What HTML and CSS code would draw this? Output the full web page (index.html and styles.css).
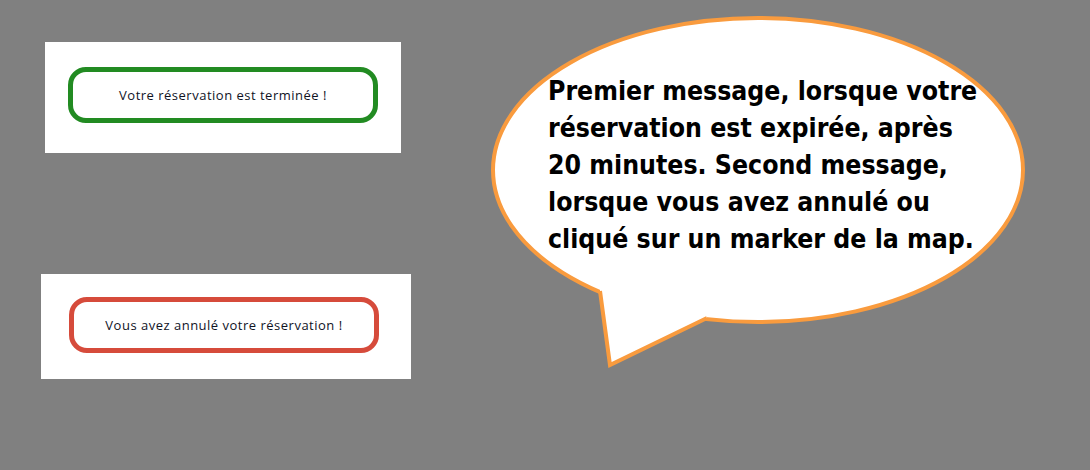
FILE: index.html
```html
<!DOCTYPE html>
<html lang="fr">
<head>
<meta charset="utf-8">
<title>Messages de réservation</title>
<link rel="stylesheet" href="styles.css">
</head>
<body>
<div class="page">
  <div class="cards">
    <div class="card card-done">
      <div class="pill pill-green">Votre réservation est terminée !</div>
    </div>
    <div class="card card-cancel">
      <div class="pill pill-red">Vous avez annulé votre réservation !</div>
    </div>
  </div>
  <div class="bubble">
    <svg class="bubble-shape" width="540" height="360" viewBox="0 0 540 360">
      <ellipse cx="268" cy="155" rx="265" ry="152" fill="#fff" stroke="#f99b3e" stroke-width="4"/>
      <polygon points="110,276 120,350 217,303 217,285 110,262" fill="#fff"/>
      <polyline points="110,276 120,350 217,303" fill="none" stroke="#f99b3e" stroke-width="4" stroke-linejoin="miter"/>
    </svg>
    <p class="bubble-text">Premier message, lorsque votre<br>réservation est expirée, après<br>20 minutes. Second message,<br>lorsque vous avez annulé ou<br>cliqué sur un marker de la map.</p>
  </div>
</div>
</body>
</html>
```

FILE: styles.css
```css
html, body {
  margin: 0;
  padding: 0;
}
body {
  background: #808080;
  width: 1090px;
  height: 470px;
  overflow: hidden;
}
.page {
  display: flex;
  align-items: flex-start;
}
.cards {
  display: flex;
  flex-direction: column;
  align-items: flex-start;
  padding-top: 42px;
  width: 490px;
  flex: none;
}
.card {
  background: #fff;
  box-sizing: border-box;
}
.card-done {
  margin-left: 45px;
  width: 356px;
  height: 111px;
  padding: 25px 0 0 23px;
}
.card-cancel {
  margin-left: 41px;
  margin-top: 121px;
  width: 370px;
  height: 105px;
  padding: 23px 0 0 28px;
}
.pill {
  box-sizing: border-box;
  width: 310px;
  height: 56px;
  border: 5px solid;
  border-radius: 18px;
  display: flex;
  align-items: center;
  justify-content: center;
  font-family: "Open Sans", sans-serif;
  font-size: 13px;
  letter-spacing: 0.5px;
  color: #10131f;
}
.pill-green {
  border-color: #228b22;
}
.pill-red {
  border-color: #d64b3b;
}
.bubble {
  position: relative;
  margin-top: 15px;
  width: 540px;
  height: 360px;
  flex: none;
}
.bubble-shape {
  position: absolute;
  left: 0;
  top: 0;
}
.bubble-text {
  position: relative;
  margin: 0;
  padding: 57px 0 0 58px;
  width: 470px;
  white-space: nowrap;
  font-family: "DejaVu Sans Condensed", "DejaVu Sans", sans-serif;
  font-weight: bold;
  font-size: 26.4px;
  line-height: 37px;
  color: #000;
}
```
